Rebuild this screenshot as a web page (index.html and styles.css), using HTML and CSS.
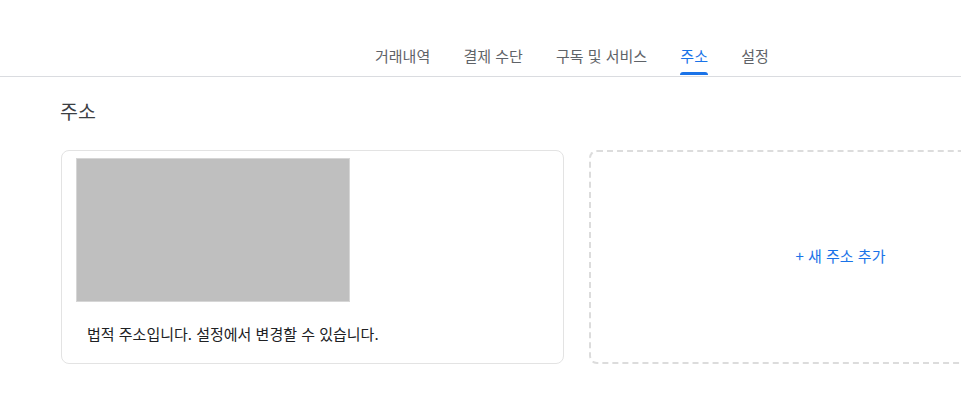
FILE: index.html
```html
<!DOCTYPE html>
<html lang="ko">
<head>
<meta charset="utf-8">
<link rel="stylesheet" href="styles.css">
</head>
<body>
<nav class="tabs">
  <a class="tab">거래내역</a>
  <a class="tab">결제 수단</a>
  <a class="tab">구독 및 서비스</a>
  <a class="tab active">주소</a>
  <a class="tab">설정</a>
</nav>
<main class="main">
  <h1 class="title">주소</h1>
  <div class="cards">
    <div class="card">
      <div class="map"></div>
      <p class="note">법적 주소입니다. 설정에서 변경할 수 있습니다.</p>
    </div>
    <div class="card add">
      <span class="add-link">+ 새 주소 추가</span>
    </div>
  </div>
</main>
</body>
</html>
```
FILE: styles.css
```css
html, body {
  margin: 0;
  padding: 0;
  background: #fff;
  overflow: hidden;
}
body {
  font-family: "Noto Sans CJK KR", "Noto Sans", Roboto, sans-serif;
  color: #202124;
}
.tabs {
  display: flex;
  align-items: flex-end;
  height: 76px;
  padding-left: 358.4px;
  border-bottom: 1px solid #dadce0;
  box-sizing: content-box;
}
.tab {
  position: relative;
  padding: 0 16.6px;
  height: 40px;
  font-size: 15px;
  line-height: 40px;
  color: #5f6368;
}
.tab.active {
  color: #1a73e8;
}
.tab.active::after {
  content: "";
  position: absolute;
  left: 16.6px;
  right: 16.6px;
  bottom: 1px;
  height: 3px;
  border-radius: 3px 3px 0 0;
  background: #1a73e8;
}
.main {
  padding: 22px 0 0 60px;
}
.title {
  margin: 0;
  font-size: 19.5px;
  font-weight: 400;
  line-height: 24px;
  color: #3c4043;
}
.cards {
  display: grid;
  grid-template-columns: 503px 503px;
  gap: 25px;
  margin-top: 27px;
  margin-left: 1px;
}
.card {
  box-sizing: border-box;
  height: 214px;
  border: 1px solid #e3e3e3;
  border-radius: 8px;
  padding: 7px 14px 0;
}
.map {
  width: 274px;
  height: 144px;
  background: #bfbfbf;
  border: 1px solid #d6d6d6;
  box-sizing: border-box;
}
.note {
  margin: 22px 0 0 11px;
  font-size: 15px;
  line-height: 20px;
  color: #202124;
}
.card.add {
  padding: 0 0 3px;
  border: 2px dashed #dcdcdc;
  display: flex;
  align-items: center;
  justify-content: center;
}
.add-link {
  font-size: 15px;
  color: #1a73e8;
}
```
